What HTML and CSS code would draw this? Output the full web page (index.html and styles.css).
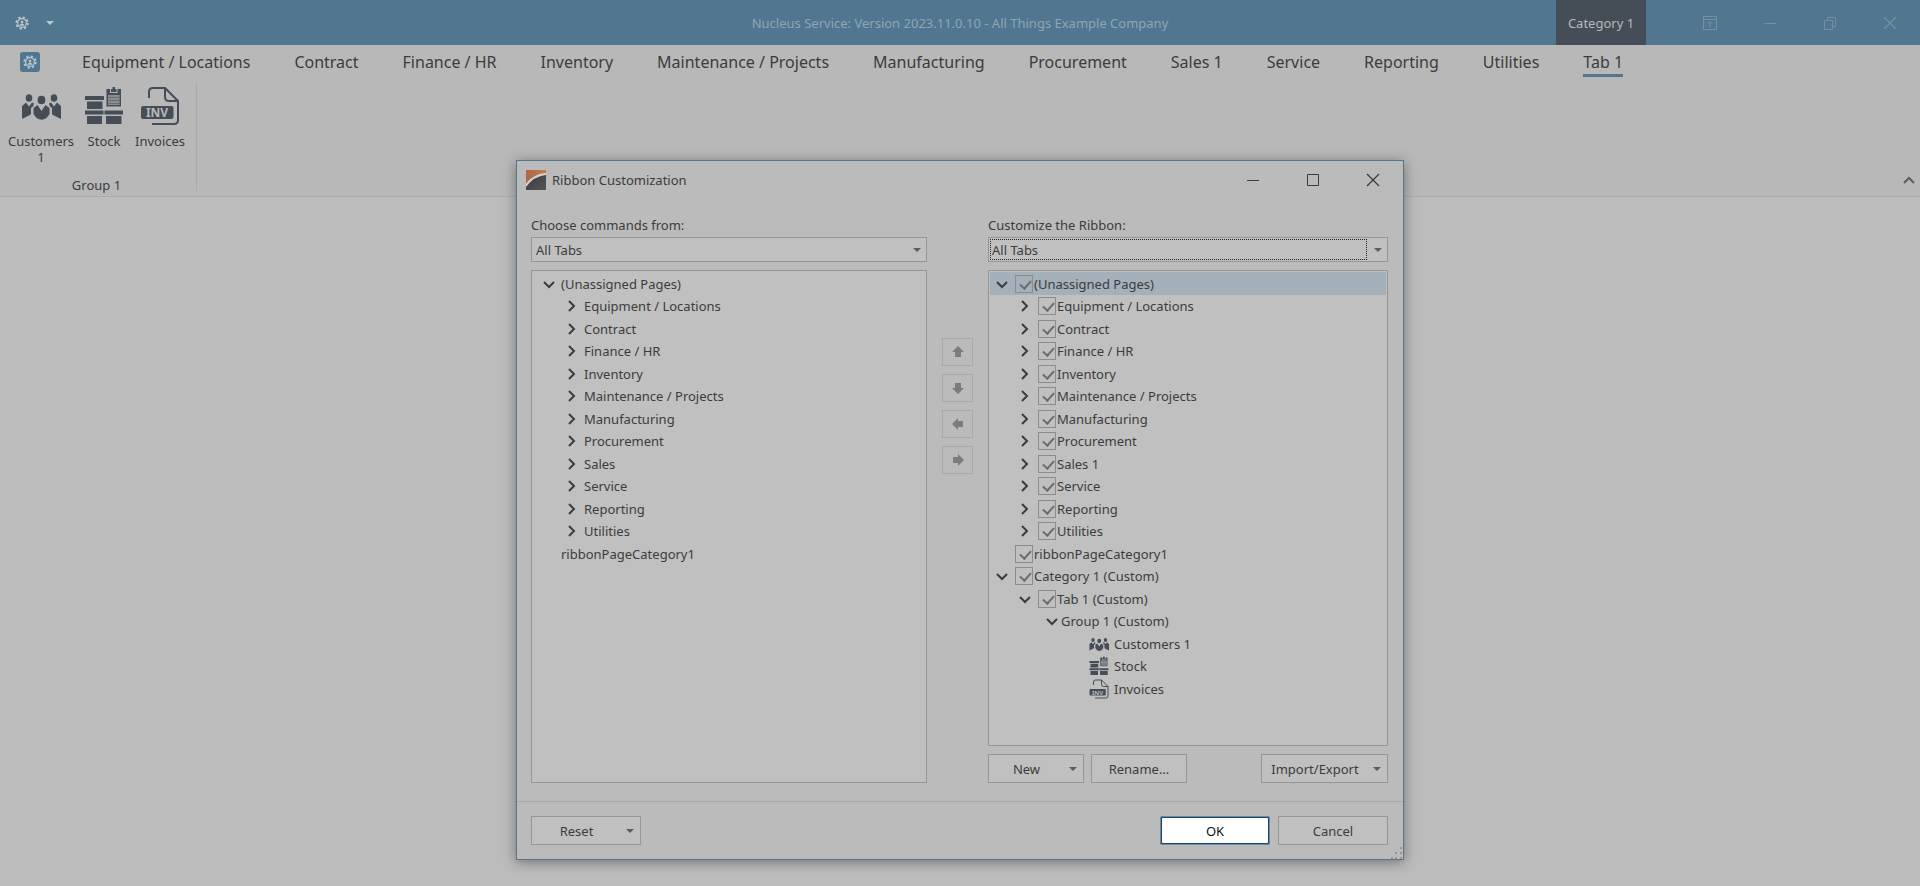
FILE: index.html
```
<!DOCTYPE html>
<html lang="en">
<head>
    <meta charset="UTF-8">
    <meta name="viewport" content="width=device-width, initial-scale=1.0">
    <title>Nucleus Service</title>
    <link rel="stylesheet" href="styles.css">
</head>
<body>
    <!-- Shared icons -->
    <svg class="sprite" aria-hidden="true">
        <symbol id="gear" viewBox="0 0 16 16">
            <circle cx="8" cy="8" r="5" fill="none" stroke="currentColor" stroke-width="1.4"/>
            <circle cx="8" cy="8" r="6.6" fill="none" stroke="currentColor" stroke-width="2" stroke-dasharray="2.6 2.58"/>
            <circle cx="8" cy="6.8" r="1.5" fill="currentColor"/>
            <path d="M5.4 11c.2-1.6 1.2-2.4 2.6-2.4s2.4.8 2.6 2.4z" fill="currentColor"/>
        </symbol>
        <symbol id="customers" viewBox="0 0 40 40">
            <g fill="currentColor">
                <ellipse cx="8" cy="12" rx="3.3" ry="3.8"/>
                <ellipse cx="33" cy="12" rx="3.3" ry="3.8"/>
                <ellipse cx="20.500" cy="14" rx="3.900" ry="4.300"/>
                <path d="M1 20l4-3.500 3 4 3-4 2 1-1 3-2 1.500V28l-1 1-8 4z"/>
                <path d="M40 20l-4-3.500-3 4-3-4-2 1 1 3 2 1.500V28l1 1 8 4z"/>
                <path d="M12.500 22l4-3 4 6 4-6 4 3v6l-3 4q-5 3.500-10 0l-3-4z"/>
            </g>
        </symbol>
        <symbol id="stock" viewBox="0 0 40 40">
            <g fill="currentColor">
                <path d="M1 10h19v4H1zM3 15.500h15.500V23H3zM1 24.500h18.500v4H1zM20.500 24.500H39v4H20.500zM3 30h15v8H3zM22 30h15.500v8H22z"/>
                <path fill-rule="evenodd" d="M22.500 3H26v4h7.500V3H37v17.500H22.500zM24 9v10h11.500V9z"/>
                <path d="M27 3h1.500V1h2.500v2h1.500v3H27z"/>
                <path d="M24 9h11.500v10H24z" opacity=".4"/>
                <path d="M24 11h11.500v1H24zM24 14h11.500v1H24zM24 17h11.500v1H24z" opacity=".5"/>
            </g>
        </symbol>
        <symbol id="invoice" viewBox="0 0 40 40">
            <path d="M9 12V6q0-4 4-4h12l13 13v19q0 4-4 4H12M25 2v9q0 4 4 4h9" fill="none" stroke="currentColor" stroke-width="2"/>
            <rect x="1" y="20" width="32.5" height="13" rx="2" fill="currentColor"/>
            <text x="17" y="31" text-anchor="middle" class="inv-text">INV</text>
        </symbol>
        <symbol id="down" viewBox="0 0 12 12"><path d="M1 4l5 5 5-5" fill="none" stroke="currentColor" stroke-width="2"/></symbol>
        <symbol id="right" viewBox="0 0 12 12"><path d="M3 1l5 5-5 5" fill="none" stroke="currentColor" stroke-width="2"/></symbol>
        <symbol id="arrow" viewBox="0 0 12 12"><path d="M6 0l6 6H9v5H3V6H0z" fill="currentColor"/></symbol>
        <symbol id="minimize" viewBox="0 0 14 14"><path d="M1 7.5h12" fill="none" stroke="currentColor"/></symbol>
        <symbol id="maximize" viewBox="0 0 14 14"><path d="M1.5 1.5h11v11h-11z" fill="none" stroke="currentColor"/></symbol>
        <symbol id="close" viewBox="0 0 14 14"><path d="M1 1l12 12M13 1L1 13" fill="none" stroke="currentColor" stroke-width="1.3"/></symbol>
        <symbol id="restore" viewBox="0 0 14 14"><path d="M1.5 4.5h8v9h-8zM4.5 4V1.5h8v9H10" fill="none" stroke="currentColor"/></symbol>
        <symbol id="ribbon-mode" viewBox="0 0 14 14"><path d="M.5.5h13v13H.5zM.5 3.5h13M7 11.5v-6M4.5 8L7 5.5 9.5 8" fill="none" stroke="currentColor"/></symbol>
    </svg>

    <header class="titlebar">
        <div class="quick-access">
            <button aria-label="Application menu"><svg class="gear"><use href="#gear"/></svg></button>
            <button aria-label="Customize quick access"><span class="caret"></span></button>
        </div>
        <h1 class="app-title">Nucleus Service: Version 2023.11.0.10 - All Things Example Company</h1>
        <div class="titlebar-right">
            <div class="category">Category 1</div>
            <div class="window-buttons">
                <button aria-label="Ribbon display options"><svg><use href="#ribbon-mode"/></svg></button>
                <button aria-label="Minimize"><svg><use href="#minimize"/></svg></button>
                <button aria-label="Restore"><svg><use href="#restore"/></svg></button>
                <button aria-label="Close"><svg><use href="#close"/></svg></button>
            </div>
        </div>
    </header>

    <section class="ribbon">
        <div class="ribbon-header">
            <button class="app-button" aria-label="Application"><svg class="gear"><use href="#gear"/></svg></button>
            <nav class="tabs">
                <a href="#">Equipment / Locations</a>
                <a href="#">Contract</a>
                <a href="#">Finance / HR</a>
                <a href="#">Inventory</a>
                <a href="#">Maintenance / Projects</a>
                <a href="#">Manufacturing</a>
                <a href="#">Procurement</a>
                <a href="#">Sales 1</a>
                <a href="#">Service</a>
                <a href="#">Reporting</a>
                <a href="#">Utilities</a>
                <a href="#" class="active">Tab 1</a>
            </nav>
        </div>
        <div class="ribbon-body">
            <div class="group">
                <div class="group-items">
                    <button class="item item-wide"><svg><use href="#customers"/></svg>Customers 1</button>
                    <button class="item"><svg><use href="#stock"/></svg>Stock</button>
                    <button class="item"><svg><use href="#invoice"/></svg>Invoices</button>
                </div>
                <div class="group-name">Group 1</div>
            </div>
            <button class="collapse" aria-label="Collapse the ribbon"><svg><use href="#down"/></svg></button>
        </div>
    </section>

    <main class="overlay">
        <div class="dialog" role="dialog" aria-labelledby="dialogTitle">
            <div class="dialog-title">
                <svg class="logo" viewBox="0 0 20 20">
                    <defs>
                        <linearGradient id="logoTop"><stop offset="0" stop-color="#b0654c"/><stop offset="1" stop-color="#c08048"/></linearGradient>
                        <linearGradient id="logoBottom" x2="1" y2="1"><stop offset="0" stop-color="#3c3c3c"/><stop offset="1" stop-color="#555"/></linearGradient>
                    </defs>
                    <path d="M0 0h20v3Q7 4 0 14z" fill="url(#logoTop)"/>
                    <path d="M0 14Q7 4 20 3v2Q8 6 0 17z" fill="#d0d0d0"/>
                    <path d="M0 20v-3Q8 6 20 5v15z" fill="url(#logoBottom)"/>
                </svg>
                <h2 id="dialogTitle">Ribbon Customization</h2>
                <div class="window-buttons">
                    <button aria-label="Minimize"><svg><use href="#minimize"/></svg></button>
                    <button aria-label="Maximize"><svg><use href="#maximize"/></svg></button>
                    <button aria-label="Close"><svg><use href="#close"/></svg></button>
                </div>
            </div>

            <div class="dialog-body">
                <div class="column">
                    <label for="commands">Choose commands from:</label>
                    <div class="select">
                        <select id="commands"><option>All Tabs</option></select>
                        <span class="caret"></span>
                    </div>
                    <ul class="tree tree-commands">
                        <li><button class="twisty" aria-label="Collapse"><svg><use href="#down"/></svg></button>(Unassigned Pages)</li>
                        <li class="level-1"><button class="twisty" aria-label="Expand"><svg><use href="#right"/></svg></button>Equipment / Locations</li>
                        <li class="level-1"><button class="twisty" aria-label="Expand"><svg><use href="#right"/></svg></button>Contract</li>
                        <li class="level-1"><button class="twisty" aria-label="Expand"><svg><use href="#right"/></svg></button>Finance / HR</li>
                        <li class="level-1"><button class="twisty" aria-label="Expand"><svg><use href="#right"/></svg></button>Inventory</li>
                        <li class="level-1"><button class="twisty" aria-label="Expand"><svg><use href="#right"/></svg></button>Maintenance / Projects</li>
                        <li class="level-1"><button class="twisty" aria-label="Expand"><svg><use href="#right"/></svg></button>Manufacturing</li>
                        <li class="level-1"><button class="twisty" aria-label="Expand"><svg><use href="#right"/></svg></button>Procurement</li>
                        <li class="level-1"><button class="twisty" aria-label="Expand"><svg><use href="#right"/></svg></button>Sales</li>
                        <li class="level-1"><button class="twisty" aria-label="Expand"><svg><use href="#right"/></svg></button>Service</li>
                        <li class="level-1"><button class="twisty" aria-label="Expand"><svg><use href="#right"/></svg></button>Reporting</li>
                        <li class="level-1"><button class="twisty" aria-label="Expand"><svg><use href="#right"/></svg></button>Utilities</li>
                        <li class="leaf">ribbonPageCategory1</li>
                    </ul>
                </div>

                <div class="move-buttons">
                    <button disabled aria-label="Move up"><svg><use href="#arrow"/></svg></button>
                    <button disabled aria-label="Move down"><svg class="turn-down"><use href="#arrow"/></svg></button>
                    <button disabled aria-label="Remove"><svg class="turn-left"><use href="#arrow"/></svg></button>
                    <button disabled aria-label="Add"><svg class="turn-right"><use href="#arrow"/></svg></button>
                </div>

                <div class="column">
                    <label for="ribbonTabs">Customize the Ribbon:</label>
                    <div class="select focused">
                        <select id="ribbonTabs"><option>All Tabs</option></select>
                        <span class="caret"></span>
                    </div>
                    <ul class="tree">
                        <li class="selected"><button class="twisty" aria-label="Collapse"><svg><use href="#down"/></svg></button><label><input type="checkbox" checked>(Unassigned Pages)</label></li>
                        <li class="level-1"><button class="twisty" aria-label="Expand"><svg><use href="#right"/></svg></button><label><input type="checkbox" checked>Equipment / Locations</label></li>
                        <li class="level-1"><button class="twisty" aria-label="Expand"><svg><use href="#right"/></svg></button><label><input type="checkbox" checked>Contract</label></li>
                        <li class="level-1"><button class="twisty" aria-label="Expand"><svg><use href="#right"/></svg></button><label><input type="checkbox" checked>Finance / HR</label></li>
                        <li class="level-1"><button class="twisty" aria-label="Expand"><svg><use href="#right"/></svg></button><label><input type="checkbox" checked>Inventory</label></li>
                        <li class="level-1"><button class="twisty" aria-label="Expand"><svg><use href="#right"/></svg></button><label><input type="checkbox" checked>Maintenance / Projects</label></li>
                        <li class="level-1"><button class="twisty" aria-label="Expand"><svg><use href="#right"/></svg></button><label><input type="checkbox" checked>Manufacturing</label></li>
                        <li class="level-1"><button class="twisty" aria-label="Expand"><svg><use href="#right"/></svg></button><label><input type="checkbox" checked>Procurement</label></li>
                        <li class="level-1"><button class="twisty" aria-label="Expand"><svg><use href="#right"/></svg></button><label><input type="checkbox" checked>Sales 1</label></li>
                        <li class="level-1"><button class="twisty" aria-label="Expand"><svg><use href="#right"/></svg></button><label><input type="checkbox" checked>Service</label></li>
                        <li class="level-1"><button class="twisty" aria-label="Expand"><svg><use href="#right"/></svg></button><label><input type="checkbox" checked>Reporting</label></li>
                        <li class="level-1"><button class="twisty" aria-label="Expand"><svg><use href="#right"/></svg></button><label><input type="checkbox" checked>Utilities</label></li>
                        <li class="leaf"><label><input type="checkbox" checked>ribbonPageCategory1</label></li>
                        <li><button class="twisty" aria-label="Collapse"><svg><use href="#down"/></svg></button><label><input type="checkbox" checked>Category 1 (Custom)</label></li>
                        <li class="level-1"><button class="twisty" aria-label="Collapse"><svg><use href="#down"/></svg></button><label><input type="checkbox" checked>Tab 1 (Custom)</label></li>
                        <li class="level-2"><button class="twisty" aria-label="Collapse"><svg><use href="#down"/></svg></button>Group 1 (Custom)</li>
                        <li class="level-3"><svg><use href="#customers"/></svg>Customers 1</li>
                        <li class="level-3"><svg><use href="#stock"/></svg>Stock</li>
                        <li class="level-3"><svg><use href="#invoice"/></svg>Invoices</li>
                    </ul>
                    <div class="tree-actions">
                        <button class="btn btn-drop">New<span class="caret"></span></button>
                        <button class="btn">Rename...</button>
                        <button class="btn btn-drop btn-export">Import/Export<span class="caret"></span></button>
                    </div>
                </div>
            </div>

            <div class="dialog-footer">
                <button class="btn btn-drop">Reset<span class="caret"></span></button>
                <button class="btn btn-ok">OK</button>
                <button class="btn">Cancel</button>
                <svg class="grip" viewBox="0 0 12 12"><path d="M9 0h2v2H9zM4 5h2v2H4zM9 5h2v2H9zM0 10h2v2H0zM4 10h2v2H4zM9 10h2v2H9z" fill="currentColor"/></svg>
            </div>
        </div>
    </main>
</body>
</html>
```
FILE: styles.css
```
* {
    margin: 0;
    padding: 0;
    box-sizing: border-box;
}

body {
    font-family: Tahoma, 'Noto Sans', 'Liberation Sans', sans-serif;
    font-size: 13px;
    line-height: 16px;
    color: #3c3c3c;
    background: #bcbcbc;
    min-height: 100vh;
    position: relative;
}

button, select {
    font: inherit;
    color: inherit;
    background: none;
    border: none;
}

a {
    color: inherit;
    text-decoration: none;
}

ul {
    list-style: none;
}

svg {
    display: block;
    flex: none;
}

.sprite {
    display: none;
}

.inv-text {
    font-size: 12px;
    font-weight: bold;
    fill: #b8b8b8;
}

.caret {
    border: 4px solid transparent;
    border-top-color: #5c5c5c;
    border-bottom: none;
}

/* Title bar */
.titlebar {
    display: grid;
    grid-template-columns: 1fr auto 1fr;
    height: 45px;
    background: #51768f;
}

.quick-access {
    display: flex;
    align-items: center;
    gap: 13px;
    padding-left: 15px;
}

.quick-access button {
    color: #bcc8d0;
}

.quick-access .caret {
    display: block;
    margin-left: 4px;
    border-top-color: #bcc8d0;
}

.gear {
    width: 14px;
    height: 14px;
}

.app-title {
    align-self: center;
    font-size: 13px;
    font-weight: normal;
    color: #8fa6b5;
}

.titlebar-right {
    display: flex;
    justify-content: flex-end;
}

.category {
    display: flex;
    align-items: center;
    justify-content: center;
    width: 90px;
    margin-right: 34px;
    background: #454d57;
    color: #b8b8b8;
}

.window-buttons {
    display: flex;
}

.window-buttons button {
    display: flex;
    align-items: center;
    justify-content: center;
    width: 60px;
}

.window-buttons svg {
    width: 14px;
    height: 14px;
}

.titlebar .window-buttons {
    color: #7590a2;
}

/* Ribbon */
.ribbon {
    background: #b8b8b8;
    border-bottom: 1px solid #aaa;
}

.ribbon-header {
    display: flex;
    align-items: flex-start;
    gap: 42px;
    height: 36px;
    padding: 7px 20px 0;
}

.tabs {
    display: flex;
    gap: 44px;
    font-size: 16px;
    line-height: 20px;
}

.tabs a {
    padding-bottom: 2px;
    white-space: nowrap;
    border-bottom: 3px solid transparent;
}

.tabs .active {
    border-bottom-color: #51768f;
}

.app-button {
    display: flex;
    align-items: center;
    justify-content: center;
    width: 20px;
    height: 20px;
    border-radius: 3px;
    background: #51768f;
    color: #bcc8d0;
}

.ribbon-body {
    display: flex;
    justify-content: space-between;
    align-items: flex-end;
    padding: 2px 5px 5px;
}

.group {
    display: flex;
    flex-direction: column;
    justify-content: space-between;
    width: 192px;
    height: 108px;
    border-right: 1px solid #aaa;
}

.group-items {
    display: flex;
    gap: 11px;
    padding: 3px 0 0 4px;
}

.item {
    display: flex;
    flex-direction: column;
    align-items: center;
    gap: 7px;
    min-width: 40px;
}

.item-wide {
    width: 64px;
}

.item svg {
    width: 40px;
    height: 40px;
    color: #454d57;
}

.group-name {
    padding-right: 8px;
    line-height: 12px;
    text-align: center;
}

.collapse {
    padding-bottom: 4px;
    color: #5c5c5c;
}

.collapse svg {
    width: 12px;
    height: 12px;
    transform: rotate(180deg);
}

/* Dialog */
.overlay {
    position: absolute;
    inset: 0;
    display: flex;
    justify-content: center;
    align-items: flex-start;
    padding-top: 160px;
}

.dialog {
    width: 888px;
    max-width: 100%;
    background: #bbb;
    border: 1px solid #51768f;
    box-shadow: 0 2px 12px rgba(0, 0, 0, 0.4);
}

.dialog-title {
    display: flex;
    align-items: center;
    gap: 6px;
    height: 38px;
    padding-left: 9px;
}

.dialog-title h2 {
    flex: 1;
    font-size: 13px;
    font-weight: normal;
}

.dialog-title .window-buttons {
    align-self: stretch;
}

.logo {
    width: 20px;
    height: 20px;
}

.dialog-body {
    display: grid;
    grid-template-columns: 396px 31px 1fr;
    gap: 15px;
    padding: 18px 15px 18px 14px;
    border-bottom: 1px solid #aaa;
}

.column {
    display: flex;
    flex-direction: column;
    height: 566px;
}

.column > label {
    margin-bottom: 4px;
}

.select {
    position: relative;
    display: flex;
    height: 25px;
    margin-bottom: 8px;
    border: 1px solid #969696;
    background: #c0c0c0;
}

.select select {
    flex: 1;
    appearance: none;
    padding-left: 4px;
    outline: none;
}

.select .caret {
    position: absolute;
    right: 5px;
    top: 10px;
    pointer-events: none;
}

.select.focused select {
    margin: 1px 20px 1px 1px;
    padding-left: 1px;
    border: 1px dotted #222;
}

.tree {
    flex: 1;
    display: grid;
    grid-auto-rows: 23px 22px;
    align-content: start;
    padding: 1px;
    border: 1px solid #969696;
    background: #c0c0c0;
}

.tree li,
.tree label {
    display: flex;
    align-items: center;
}

.tree label {
    gap: 1px;
    padding-left: 1px;
}

.tree .selected {
    background: #a4b0ba;
}

.tree .leaf {
    padding-left: 24px;
}

.tree .level-1 {
    padding-left: 23px;
}

.tree .level-2 {
    padding-left: 53px;
}

.tree .level-3 {
    gap: 5px;
    padding-left: 99px;
}

.tree-commands {
    padding-left: 5px;
}

.level-3 svg {
    width: 20px;
    height: 20px;
    color: #454d57;
}

.twisty {
    display: flex;
    justify-content: center;
    width: 24px;
}

.level-2 .twisty {
    width: 18px;
}

.twisty svg {
    width: 12px;
    height: 12px;
}

input[type="checkbox"] {
    appearance: none;
    width: 18px;
    height: 18px;
    border: 1px solid #8c8c8c;
}

input[type="checkbox"]:checked::before {
    content: "";
    display: block;
    width: 5px;
    height: 9px;
    margin: 2px 0 0 6px;
    border: solid #6c6c6c;
    border-width: 0 2px 2px 0;
    transform: rotate(42deg);
}

.move-buttons {
    display: flex;
    flex-direction: column;
    gap: 8px;
    padding-top: 121px;
}

.move-buttons button {
    display: flex;
    align-items: center;
    justify-content: center;
    height: 28px;
    border: 1px solid #aaa;
    color: #7c7c7c;
}

.move-buttons svg {
    width: 12px;
    height: 12px;
}

.turn-down {
    transform: rotate(180deg);
}

.turn-left {
    transform: rotate(-90deg);
}

.turn-right {
    transform: rotate(90deg);
}

.tree-actions {
    display: flex;
    gap: 7px;
    margin-top: 8px;
}

.btn {
    display: flex;
    align-items: center;
    justify-content: center;
    width: 96px;
    height: 29px;
    border: 1px solid #969696;
    background: #c0c0c0;
}

.btn-drop {
    position: relative;
    padding-right: 19px;
}

.btn-drop .caret {
    position: absolute;
    right: 6px;
}

.btn-export {
    width: 127px;
    margin-left: auto;
}

.dialog-footer {
    position: relative;
    display: flex;
    gap: 8px;
    padding: 14px 15px 14px 14px;
}

.dialog-footer .btn {
    width: 110px;
}

.dialog-footer .btn-ok {
    margin-left: auto;
    background: #fff;
    border: 2px solid #1d456b;
    outline: 1px solid #6b8ba0;
    outline-offset: -1px;
    border-radius: 3px;
    color: #111;
}

.grip {
    position: absolute;
    right: 0;
    bottom: 0;
    width: 12px;
    height: 12px;
    color: #949494;
}
```
